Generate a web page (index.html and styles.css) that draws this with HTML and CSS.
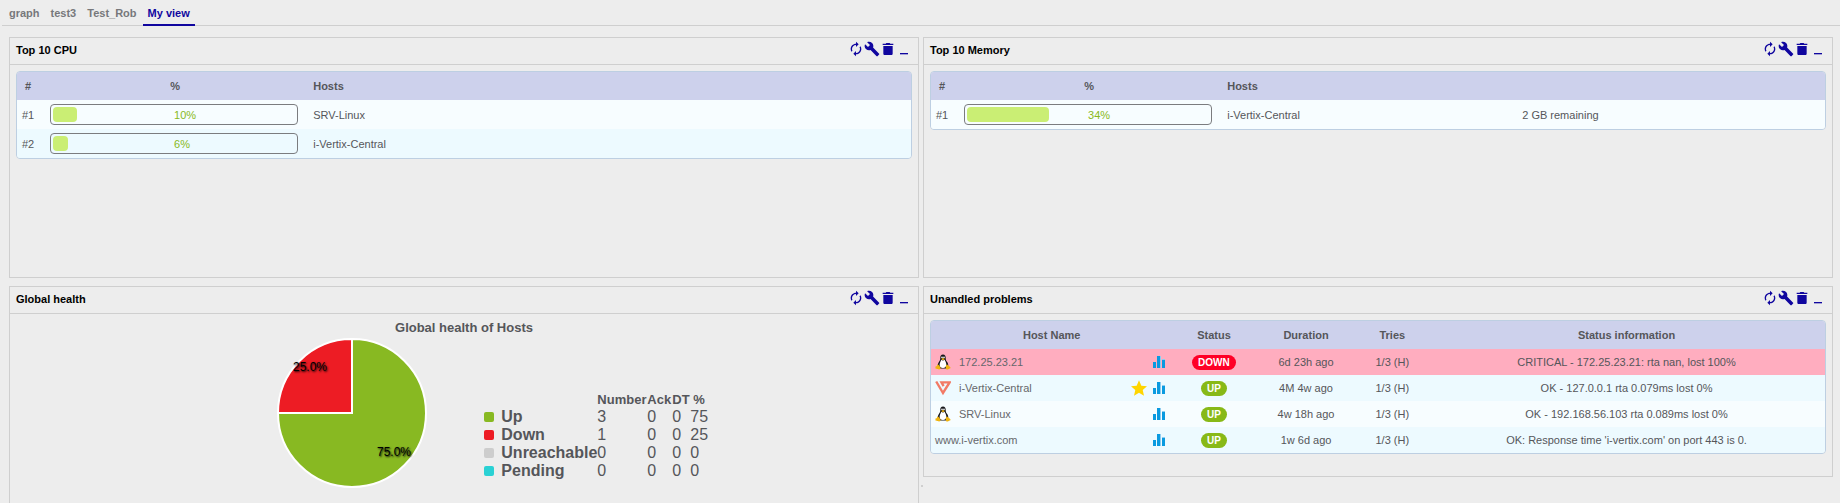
FILE: index.html
```html
<!DOCTYPE html>
<html lang="en">
<head>
<meta charset="utf-8">
<title>My view</title>
<link rel="stylesheet" href="styles.css">
</head>
<body>
<svg class="sprite" aria-hidden="true">
  <symbol id="refresh" viewBox="0 0 24 24"><path d="M12 6v3l4-4-4-4v3c-4.42 0-8 3.58-8 8 0 1.57.46 3.03 1.24 4.26L6.7 14.8c-.45-.83-.7-1.79-.7-2.8 0-3.31 2.69-6 6-6zm6.76 1.74L17.3 9.2c.44.84.7 1.79.7 2.8 0 3.31-2.69 6-6 6v-3l-4 4 4 4v-3c4.42 0 8-3.58 8-8 0-1.57-.46-3.03-1.24-4.26z"/></symbol>
  <symbol id="wrench" viewBox="0 0 24 24"><path d="M22.7 19l-9.1-9.1c.9-2.3.4-5-1.5-6.9-2-2-5-2.4-7.4-1.3L9 6 6 9 1.6 4.7C.4 7.1.9 10.1 2.9 12.1c1.9 1.9 4.6 2.4 6.9 1.5l9.1 9.1c.4.4 1 .4 1.4 0l2.3-2.3c.5-.4.5-1.1.1-1.4z"/></symbol>
  <symbol id="trash" viewBox="0 0 24 24"><path d="M5 19c0 1.100.9 2 2 2h10c1.100 0 2-.9 2-2V7.500H5zM20 4h-4.500l-1-1h-5l-1 1H4v2h16z"/></symbol>
  <symbol id="minimize" viewBox="0 0 24 24"><path d="M6 18h12v2H6z"/></symbol>
  <symbol id="chart" viewBox="0 0 12 12"><path fill="#0a9ae0" d="M0 6h3v6H0zM4 0h3v12H4zM9 4h3v8H9z"/><path fill="#8fcdf0" d="M7 0h1v12H7zM9 3h3v1H9z"/></symbol>
  <symbol id="star" viewBox="0 0 24 24"><path fill="#ffd500" d="M12 .5l3.500 8 8.500.8-6.400 5.700 1.900 8.500L12 19l-7.500 4.500L6.400 15 0 9.300l8.500-.8z"/></symbol>
  <symbol id="vertix" viewBox="0 0 16 16"><path fill="none" stroke="#f27a66" stroke-width="2.400" d="M1.200 1.500L8 13 14.600 2.400H6.500L8.600 6.200"/></symbol>
  <symbol id="tux" viewBox="0 0 16 16">
    <path fill="#17171a" d="M8 .4C6.100.4 5.200 1.800 5.300 3.600c.1 2-.2 2.700-1.300 4.200C3 9.300 2.500 10.900 2.800 12.600L5 14.600h6l2.200-2c.3-1.900-.3-3.600-1.400-5-.9-1.200-1.100-2-1.100-4C10.700 1.700 9.900.4 8 .4z"/>
    <path fill="#fff" d="M6.200 5.800c.9.900 2.600.9 3.500 0 .5 1.500 1.700 3.100 1.700 5 0 1.900-1.300 3.200-3.400 3.200s-3.400-1.200-3.400-3c0-2 1.100-3.300 1.600-5.200z"/>
    <circle cx="7" cy="3.400" r=".8" fill="#fff"/><circle cx="9" cy="3.400" r=".8" fill="#fff"/>
    <path fill="#f0b40f" d="M6.200 4.900L8 4l1.900.9L8 6.200zM2.700 10.500c1 .2 1.800 1.300 2.600 2.600.7 1.200.2 2.300-1 2.300-1.300 0-2.200-.5-3.700-.8-.6-.2 0-1 0-2.100.1-.6.800-.3 1.200-.6.400-.4.300-1.400.9-1.400zM12.200 10.500c.7.700 1.100 1.400 2 1.500.4.900 1 1.300 1.500 1.700-.1.700-1.800 1-2.500 1.600-.8.600-2.400.3-2.400-1 0-1.600-.2-3.500 1.400-3.800z"/>
  </symbol>
</svg>

<nav class="tabs">
  <a class="tab" href="#graph">graph</a>
  <a class="tab" href="#test3">test3</a>
  <a class="tab" href="#rob">Test_Rob</a>
  <a class="tab active" href="#view" aria-current="page">My view</a>
</nav>

<main class="board">
  <div class="column">
    <section class="widget">
      <header class="bar"><h2>Top 10 CPU</h2>
        <div class="tools">
          <button aria-label="Refresh"><svg><use href="#refresh"/></svg></button><button aria-label="Configure"><svg><use href="#wrench"/></svg></button><button aria-label="Delete"><svg><use href="#trash"/></svg></button><button aria-label="Minimize"><svg><use href="#minimize"/></svg></button>
        </div>
      </header>
      <div class="body tall">
        <div class="frame">
          <table class="grid top">
            <colgroup><col class="c-rank"><col class="c-bar"><col></colgroup>
            <thead><tr><th>#</th><th>%</th><th class="left">Hosts</th></tr></thead>
            <tbody>
              <tr><td class="mid">#1</td><td class="meter-cell"><div class="meter"><div class="fill" style="width:10%"></div><span>10%</span></div></td><td>SRV-Linux</td></tr>
              <tr><td class="mid">#2</td><td class="meter-cell"><div class="meter"><div class="fill" style="width:6%"></div><span>6%</span></div></td><td>i-Vertix-Central</td></tr>
            </tbody>
          </table>
        </div>
      </div>
    </section>

    <section class="widget">
      <header class="bar"><h2>Global health</h2>
        <div class="tools">
          <button aria-label="Refresh"><svg><use href="#refresh"/></svg></button><button aria-label="Configure"><svg><use href="#wrench"/></svg></button><button aria-label="Delete"><svg><use href="#trash"/></svg></button><button aria-label="Minimize"><svg><use href="#minimize"/></svg></button>
        </div>
      </header>
      <div class="health">
        <h3>Global health of Hosts</h3>
        <div class="health-row">
          <svg class="pie" viewBox="0 0 150 150" role="img" aria-label="Up 75%, Down 25%">
            <g stroke="#fff" stroke-width="2">
              <path fill="#88b922" d="M75 75V1A74 74 0 1 1 1 75z"/>
              <path fill="#ed1c24" d="M75 75H1A74 74 0 0 1 75 1z"/>
            </g>
            <text x="33" y="33" text-anchor="middle">25.0%</text>
            <text x="117" y="118" text-anchor="middle">75.0%</text>
          </svg>
          <table class="legend">
            <thead><tr><td></td><td></td><th class="n">Number</th><th class="a">Ack</th><th class="d">DT</th><th class="p">%</th></tr></thead>
            <tbody>
              <tr><td class="key"><i class="swatch up"></i></td><th>Up</th><td>3</td><td>0</td><td>0</td><td>75</td></tr>
              <tr><td class="key"><i class="swatch down"></i></td><th>Down</th><td>1</td><td>0</td><td>0</td><td>25</td></tr>
              <tr><td class="key"><i class="swatch unreachable"></i></td><th>Unreachable</th><td>0</td><td>0</td><td>0</td><td>0</td></tr>
              <tr><td class="key"><i class="swatch pending"></i></td><th>Pending</th><td>0</td><td>0</td><td>0</td><td>0</td></tr>
            </tbody>
          </table>
        </div>
      </div>
    </section>
  </div>

  <div class="column">
    <section class="widget">
      <header class="bar"><h2>Top 10 Memory</h2>
        <div class="tools">
          <button aria-label="Refresh"><svg><use href="#refresh"/></svg></button><button aria-label="Configure"><svg><use href="#wrench"/></svg></button><button aria-label="Delete"><svg><use href="#trash"/></svg></button><button aria-label="Minimize"><svg><use href="#minimize"/></svg></button>
        </div>
      </header>
      <div class="body tall">
        <div class="frame">
          <table class="grid top">
            <colgroup><col class="c-rank"><col class="c-bar"><col class="c-host"><col></colgroup>
            <thead><tr><th>#</th><th>%</th><th class="left">Hosts</th><th></th></tr></thead>
            <tbody>
              <tr><td class="mid">#1</td><td class="meter-cell"><div class="meter"><div class="fill" style="width:34%"></div><span>34%</span></div></td><td>i-Vertix-Central</td><td>2 GB remaining</td></tr>
            </tbody>
          </table>
        </div>
      </div>
    </section>

    <section class="widget">
      <header class="bar"><h2>Unandled problems</h2>
        <div class="tools">
          <button aria-label="Refresh"><svg><use href="#refresh"/></svg></button><button aria-label="Configure"><svg><use href="#wrench"/></svg></button><button aria-label="Delete"><svg><use href="#trash"/></svg></button><button aria-label="Minimize"><svg><use href="#minimize"/></svg></button>
        </div>
      </header>
      <div class="body problems">
        <div class="frame">
          <table class="grid list">
            <colgroup><col class="c-name"><col class="c-status"><col class="c-duration"><col class="c-tries"><col></colgroup>
            <thead><tr><th>Host Name</th><th>Status</th><th>Duration</th><th>Tries</th><th>Status information</th></tr></thead>
            <tbody>
              <tr class="critical"><td><div class="host"><svg class="logo"><use href="#tux"/></svg><a href="#h1">172.25.23.21</a><svg class="chart"><use href="#chart"/></svg></div></td><td><span class="badge down">DOWN</span></td><td>6d 23h ago</td><td>1/3 (H)</td><td>CRITICAL - 172.25.23.21: rta nan, lost 100%</td></tr>
              <tr><td><div class="host"><svg class="logo"><use href="#vertix"/></svg><a href="#h2">i-Vertix-Central</a><svg class="star"><use href="#star"/></svg><svg class="chart"><use href="#chart"/></svg></div></td><td><span class="badge up">UP</span></td><td>4M 4w ago</td><td>1/3 (H)</td><td>OK - 127.0.0.1 rta 0.079ms lost 0%</td></tr>
              <tr><td><div class="host"><svg class="logo"><use href="#tux"/></svg><a href="#h3">SRV-Linux</a><svg class="chart"><use href="#chart"/></svg></div></td><td><span class="badge up">UP</span></td><td>4w 18h ago</td><td>1/3 (H)</td><td>OK - 192.168.56.103 rta 0.089ms lost 0%</td></tr>
              <tr><td><div class="host"><a href="#h4">www.i-vertix.com</a><svg class="chart"><use href="#chart"/></svg></div></td><td><span class="badge up">UP</span></td><td>1w 6d ago</td><td>1/3 (H)</td><td>OK: Response time 'i-vertix.com' on port 443 is 0.</td></tr>
            </tbody>
          </table>
        </div>
      </div>
    </section>
  </div>
  <div class="drop"></div>
</main>
</body>
</html>
```
FILE: styles.css
```css
* { box-sizing: border-box; }
html, body { height: 100%; }
body {
  margin: 0;
  overflow: hidden;
  background: #ededed;
  color: #55565a;
  font: 11px/14px "Liberation Sans", Arial, sans-serif;
}
a { color: inherit; text-decoration: none; }
h2, h3 { margin: 0; }
.sprite { position: absolute; width: 0; height: 0; }

.tabs {
  display: flex;
  gap: 1px;
  margin-left: 2px;
  padding-left: 2px;
  border-bottom: 1px solid #cfcfcf;
}
.tab {
  padding: 6px 5px 4px;
  margin-bottom: -1px;
  border-bottom: 2px solid transparent;
  color: #77787b;
  font-weight: bold;
}
.tab.active { border-color: #10069f; color: #10069f; }

.board {
  display: grid;
  grid-template-columns: 1fr 1fr;
  column-gap: 4px;
  padding: 11px 7px 0 9px;
  position: relative;
}
.column { display: flex; flex-direction: column; gap: 8px; }
.widget { border: 1px solid #cfcfcf; }
.bar {
  display: flex;
  justify-content: space-between;
  align-items: flex-start;
  height: 27px;
  padding: 3px 6px 0;
  border-bottom: 1px solid #cfcfcf;
}
.bar h2 { color: #000; font-size: 11px; line-height: 18px; }
.tools { display: flex; }
.tools button { padding: 0; border: 0; background: none; height: 16px; cursor: pointer; }
.tools svg { display: block; width: 16px; height: 16px; fill: #10069f; }
.body { padding: 6px; }
.tall { height: 212px; }
.problems { padding-bottom: 22px; }

.frame { border: 1px solid #bdcfe2; border-radius: 4px; overflow: hidden; }
.grid { width: 100%; table-layout: fixed; border-collapse: collapse; }
.grid th, .grid td { padding: 0 4px; }
.grid th { height: 28px; background: #cdd1ec; }
.grid .left { text-align: left; }
.grid tbody tr:nth-child(odd) { background: #f7fdff; }
.grid tbody tr:nth-child(even) { background: #edfaff; }
.top td { height: 29px; }
.top .mid { padding: 0 2px 0 0; text-align: center; }
.top .meter-cell { padding: 0 11px 0 9px; }
.top th:first-child { padding: 0 2px 0 0; }
.c-rank { width: 24px; }
.c-bar { width: 30%; }
.c-host { width: 33%; }

.meter {
  position: relative;
  height: 21px;
  padding: 2px;
  border: 1px solid #7b7c7f;
  border-radius: 4px;
}
.fill { height: 15px; border-radius: 4px; background: #caee74; }
.meter span {
  position: absolute;
  left: 50%;
  top: 0;
  line-height: 20px;
  color: #88b922;
}

.c-name { width: 27%; }
.c-status { width: 9.3%; }
.c-duration { width: 11.3%; }
.c-tries { width: 8%; }
.list td { height: 26px; text-align: center; }
.grid.list tbody .critical { background: #ffadbf; }
.host { display: flex; align-items: center; gap: 6px; height: 26px; padding-right: 3px; }
.host a { margin-right: auto; color: #66676b; }
.logo { width: 16px; height: 16px; margin-right: 2px; }
.chart { width: 12px; height: 12px; }
.star { width: 16px; height: 16px; }
.badge {
  display: inline-block;
  padding: 0 6px;
  border-radius: 8px;
  color: #fff;
  font-size: 10px;
  font-weight: bold;
  line-height: 15px;
  vertical-align: middle;
}
.badge.down { background: #ff0026; }
.badge.up { background: #88b917; }

.health { padding: 5px 0 60px; }
.health h3 { font-size: 13px; line-height: 18px; text-align: center; }
.health-row { display: flex; align-items: flex-start; padding-left: 29%; }
.pie { flex: none; width: 150px; height: 150px; margin: 1px 57px 0 4px; overflow: visible; }
.pie text { font-size: 12px; fill: #000; text-shadow: 1px 1px 2px #000; }
.legend { margin-top: 55px; border-collapse: collapse; font-size: 16px; line-height: 18px; }
.legend th, .legend td { padding: 0; text-align: left; }
.legend thead th { font-size: 13px; line-height: 16px; }
.legend .key { width: 17px; min-width: 17px; }
.legend .n { min-width: 50px; }
.legend .a { width: 25px; }
.legend .d { width: 18px; }
.legend .p { padding-left: 3px; }
.swatch { display: block; width: 10px; height: 10px; border-radius: 2px; }
.swatch.up { background: #88b922; }
.swatch.down { background: #ed1c24; }
.swatch.unreachable { background: #cdcdcd; }
.swatch.pending { background: #2ad1d4; }

.drop {
  position: absolute;
  left: 50%;
  top: 459px;
  width: 2px;
  height: 2px;
  margin-left: 1px;
  background: #cfcfcf;
}
```
